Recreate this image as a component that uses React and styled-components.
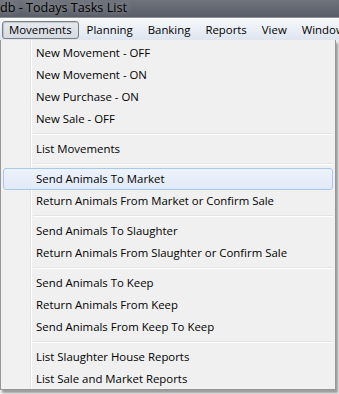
import React from 'react'
import styled, { createGlobalStyle } from 'styled-components'

const GlobalStyle = createGlobalStyle`
  html, body {
    margin: 0;
    padding: 0;
    background: #f0f0f0;
  }
  body {
    font-family: 'Open Sans', 'Noto Sans', sans-serif;
    font-size: 11.4px;
    color: #000;
  }
`

const menus = ['Movements', 'Planning', 'Banking', 'Reports', 'View', 'Window']

const groups = [
  ['New Movement - OFF', 'New Movement - ON', 'New Purchase - ON', 'New Sale - OFF'],
  ['List Movements'],
  ['Send Animals To Market', 'Return Animals From Market or Confirm Sale'],
  ['Send Animals To Slaughter', 'Return Animals From Slaughter or Confirm Sale'],
  ['Send Animals To Keep', 'Return Animals From Keep', 'Send Animals From Keep To Keep'],
  ['List Slaughter House Reports', 'List Sale and Market Reports'],
]

export default function App() {
  return (
    <Screen>
      <GlobalStyle />
      <TitleBar>db - Todays Tasks List</TitleBar>
      <MenuBar>
        {menus.map((m, i) => (
          <MenuTitle key={m} $open={i === 0}>
            {m}
          </MenuTitle>
        ))}
      </MenuBar>
      <Dropdown>
        {groups.map((g, gi) => (
          <React.Fragment key={gi}>
            {gi > 0 && <Separator />}
            {g.map(item => (
              <Item key={item} $hot={item === 'Send Animals To Market'}>
                {item}
              </Item>
            ))}
          </React.Fragment>
        ))}
      </Dropdown>
    </Screen>
  )
}

const Screen = styled.div`
  width: 339px;
  height: 394px;
  overflow: hidden;
  background: #f0f0f0;
  display: flex;
  flex-direction: column;
`

const TitleBar = styled.div`
  height: 18px;
  line-height: 16px;
  font-size: 12.6px;
  background: linear-gradient(#6f737c, #575c66);
  color: #000;
  white-space: nowrap;
  text-shadow: 0 0 6px rgba(255, 255, 255, 0.45);
  box-shadow: inset 0 -1px 0 #8a8e96;
`

const MenuBar = styled.div`
  height: 21px;
  display: flex;
  align-items: center;
  padding-left: 2px;
  background: linear-gradient(#f6f8fb, #dee5ef);
  border-top: 1px solid #fff;
  white-space: nowrap;
  overflow: hidden;
`

const MenuTitle = styled.div`
  flex: none;
  height: 18px;
  line-height: 16px;
  padding: 0 6px;
  margin-right: 1px;
  box-sizing: border-box;
  border: 1px solid ${p => (p.$open ? '#7a7e85' : 'transparent')};
  border-radius: 3px;
  background: ${p => (p.$open ? 'linear-gradient(#e6e9ee, #d6dbe2)' : 'transparent')};
  box-shadow: ${p => (p.$open ? 'inset 1px 1px 1px rgba(0,0,0,0.15)' : 'none')};
`

const Dropdown = styled.div`
  width: 336px;
  height: 350px;
  box-sizing: border-box;
  padding: 2px 2px 0 2px;
  border: 1px solid #979797;
  border-top: none;
  background: linear-gradient(
    to right,
    #f1f1f1 0,
    #f1f1f1 29px,
    #e2e3e3 29px,
    #e2e3e3 30px,
    #ffffff 30px,
    #ffffff 31px,
    #f0f0f0 31px
  );
  box-shadow: 2px 3px 2px rgba(0, 0, 0, 0.35);
`

const Item = styled.div`
  height: 22px;
  line-height: 20px;
  padding-left: 32px;
  box-sizing: border-box;
  white-space: nowrap;
  border: 1px solid ${p => (p.$hot ? '#a8c8ee' : 'transparent')};
  border-radius: 3px;
  background: ${p => (p.$hot ? 'linear-gradient(#eef3fb, #e1eaf7)' : 'transparent')};
`

const Separator = styled.div`
  height: 8px;
  margin-left: 30px;
  background: linear-gradient(
    transparent 3px,
    #e2e3e3 3px,
    #e2e3e3 4px,
    #ffffff 4px,
    #ffffff 5px,
    transparent 5px
  );
`
